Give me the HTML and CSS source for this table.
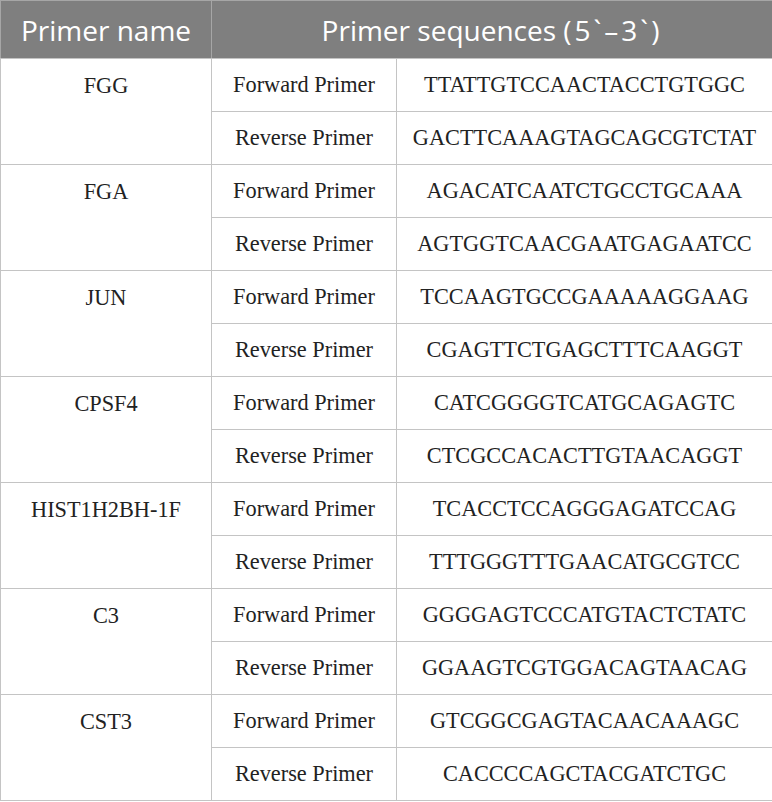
FILE: index.html
```html
<!DOCTYPE html>
<html>
<head>
<meta charset="utf-8">
<link rel="stylesheet" href="styles.css">
</head>
<body>
<table class="primers">
  <colgroup>
    <col class="c1"><col class="c2"><col class="c3">
  </colgroup>
  <thead>
    <tr class="head">
      <th>Primer name</th>
      <th colspan="2">Primer sequences <span class="ends">(5`–3`)</span></th>
    </tr>
  </thead>
  <tbody>
    <tr><td rowspan="2" class="name">FGG</td><td>Forward Primer</td><td>TTATTGTCCAACTACCTGTGGC</td></tr>
    <tr><td>Reverse Primer</td><td>GACTTCAAAGTAGCAGCGTCTAT</td></tr>
    <tr><td rowspan="2" class="name">FGA</td><td>Forward Primer</td><td>AGACATCAATCTGCCTGCAAA</td></tr>
    <tr><td>Reverse Primer</td><td>AGTGGTCAACGAATGAGAATCC</td></tr>
    <tr><td rowspan="2" class="name">JUN</td><td>Forward Primer</td><td>TCCAAGTGCCGAAAAAGGAAG</td></tr>
    <tr><td>Reverse Primer</td><td>CGAGTTCTGAGCTTTCAAGGT</td></tr>
    <tr><td rowspan="2" class="name">CPSF4</td><td>Forward Primer</td><td>CATCGGGGTCATGCAGAGTC</td></tr>
    <tr><td>Reverse Primer</td><td>CTCGCCACACTTGTAACAGGT</td></tr>
    <tr><td rowspan="2" class="name">HIST1H2BH-1F</td><td>Forward Primer</td><td>TCACCTCCAGGGAGATCCAG</td></tr>
    <tr><td>Reverse Primer</td><td>TTTGGGTTTGAACATGCGTCC</td></tr>
    <tr><td rowspan="2" class="name">C3</td><td>Forward Primer</td><td>GGGGAGTCCCATGTACTCTATC</td></tr>
    <tr><td>Reverse Primer</td><td>GGAAGTCGTGGACAGTAACAG</td></tr>
    <tr><td rowspan="2" class="name">CST3</td><td>Forward Primer</td><td>GTCGGCGAGTACAACAAAGC</td></tr>
    <tr><td>Reverse Primer</td><td>CACCCCAGCTACGATCTGC</td></tr>
  </tbody>
</table>
</body>
</html>
```

FILE: styles.css
```css
html, body {
  margin: 0;
  padding: 0;
  background: #ffffff;
}

.primers {
  width: 772px;
  border-collapse: collapse;
  table-layout: fixed;
  font-family: "Liberation Serif", "Times New Roman", serif;
  font-size: 22.3px;
  color: #222222;
}

.c1 { width: 211px; }
.c2 { width: 185px; }
.c3 { width: 376px; }

.head th {
  height: 57px;
  padding: 0;
  background: #7f7f7f;
  color: #ffffff;
  font-family: "Open Sans", "Noto Sans", sans-serif;
  font-weight: 400;
  font-size: 28px;
  text-align: center;
  vertical-align: middle;
  border: 1px solid #a6a6a6;
  border-bottom: 1px solid #c4c4c4;
}

.head .ends {
  letter-spacing: 3px;
}

.primers td {
  height: 52px;
  padding: 0;
  text-align: center;
  vertical-align: middle;
  border: 1px solid #c4c4c4;
  white-space: nowrap;
}

.primers td.name {
  vertical-align: top;
  padding-top: 14px;
}
```
